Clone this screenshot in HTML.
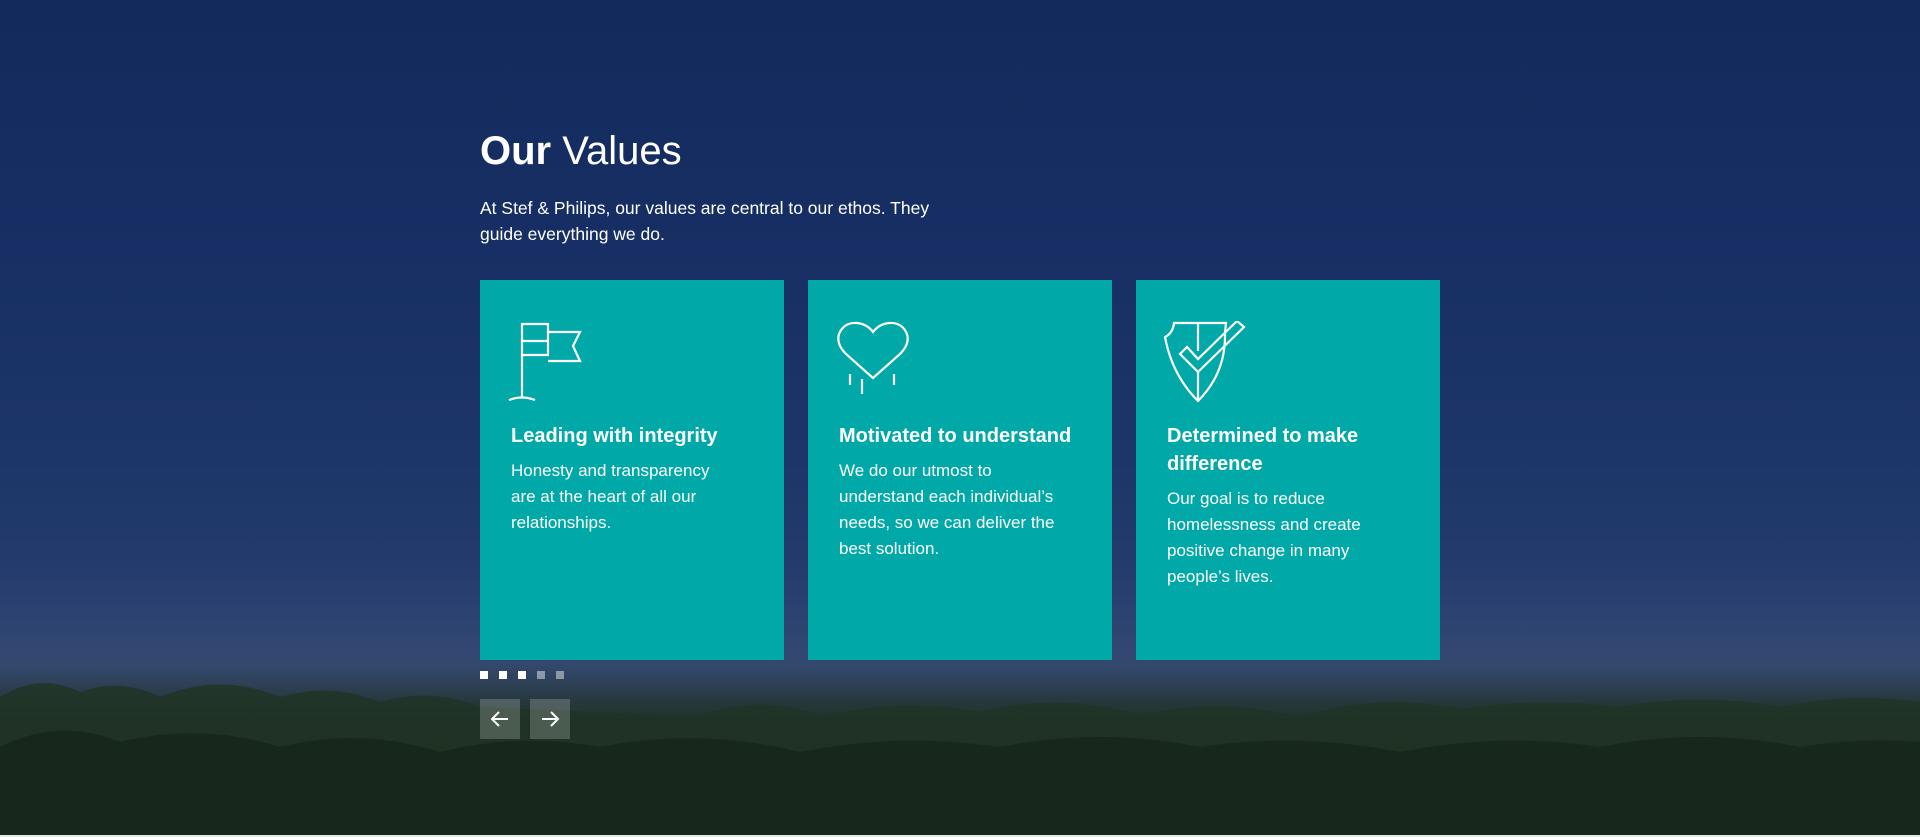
<!DOCTYPE html>
<html><head><meta charset="utf-8">
<style>
html,body{margin:0;padding:0;}
body{width:1920px;height:837px;overflow:hidden;position:relative;font-family:"Liberation Sans",Arial,sans-serif;color:#fff;
background:linear-gradient(180deg,#132a5c 0%,#172f64 30%,#1d3669 55%,#223a6c 66%,#2a4070 72%,#2b3e66 78%,#22332f 84%,#1b2a1f 92%,#141d16 100%);}
.haze{position:absolute;left:0;top:600px;width:1920px;height:120px;background:linear-gradient(180deg,rgba(60,80,130,0) 0%,rgba(70,95,145,.35) 55%,rgba(50,70,110,0) 100%);}
.trees{position:absolute;left:0;bottom:0;width:1920px;height:180px;}
.bottomline{position:absolute;left:0;bottom:0;width:1920px;height:2px;background:#e8e8e8;}
h1{position:absolute;left:480px;top:126px;margin:0;font-size:40px;font-weight:400;line-height:50px;}
h1 b{font-weight:900;}
.intro{position:absolute;left:480px;top:195px;width:490px;font-size:17.5px;line-height:26px;margin:0;}
.card{position:absolute;top:280px;width:304px;height:380px;background:#00a8a8;}
.card svg{position:absolute;left:28px;top:41px;}
.card .t{position:absolute;left:31px;top:142px;width:270px;font-size:20px;font-weight:900;line-height:28px;}
.card .p{position:absolute;left:31px;width:230px;font-size:17px;line-height:26px;}
.dots{position:absolute;left:480px;top:671px;}
.dots span{position:absolute;top:0;width:8px;height:8px;background:#fff;}
.arr{position:absolute;top:699px;width:40px;height:40px;background:rgba(255,255,255,.2);}
</style></head><body>
<div class="haze"></div>
<svg class="trees" viewBox="0 0 1920 180" preserveAspectRatio="none">
<path d="M0 40 Q40 15 80 35 Q120 20 160 40 Q220 15 280 40 Q330 25 380 45 Q430 30 480 50 L700 60 Q760 35 820 60 Q900 40 980 55 Q1060 35 1140 58 Q1220 40 1300 60 Q1380 35 1460 52 Q1540 40 1620 50 Q1700 35 1780 50 Q1850 35 1920 45 L1920 180 L0 180Z" fill="#1f3324" opacity=".8"/>
<path d="M0 90 Q60 60 120 85 Q200 65 280 90 Q360 70 440 95 Q520 75 600 90 Q700 70 800 95 Q900 75 1000 90 Q1100 70 1200 90 Q1300 75 1400 95 Q1500 75 1600 90 Q1700 70 1800 90 Q1860 80 1920 85 L1920 180 L0 180Z" fill="#18261a" opacity=".85"/>
</svg>
<div class="bottomline"></div>

<h1><b>Our</b> Values</h1>
<p class="intro">At Stef &amp; Philips, our values are central to our ethos. They guide everything we do.</p>

<div class="card" style="left:480px">
<svg width="80" height="82" viewBox="0 0 80 82" fill="none" stroke="#fff" stroke-width="2.2">
<path d="M14 2 V76 M1 79 Q14 74 27 79 M14 3 H40 V34 H14 M14 20 H40 M40 11 H72 L65 25 L72 40 H40"/>
</svg>
<div class="t">Leading with integrity</div>
<div class="p" style="top:178px;width:220px">Honesty and transparency are at the heart of all our relationships.</div>
</div>

<div class="card" style="left:808px">
<svg width="80" height="82" viewBox="0 0 80 82" fill="none" stroke="#fff" stroke-width="2.2">
<path d="M37 57 L10 33 Q0 23 3 13 Q8 1 21 2 Q31 3 37 11 Q43 3 53 2 Q66 1 71 13 Q74 23 64 33 Z"/>
<path d="M14 53 V64 M26 58 V73 M58 53 V64"/>
</svg>
<div class="t">Motivated to understand</div>
<div class="p" style="top:178px">We do our utmost to understand each individual’s needs, so we can deliver the best solution.</div>
</div>

<div class="card" style="left:1136px">
<svg width="84" height="84" viewBox="0 0 84 84" fill="none" stroke="#fff" stroke-width="2.2">
<path d="M10 2 H62 L61 12 Q62 52 34 80 Q8 54 1 16 Q9 12 10 2Z"/>
<path d="M34 2 V30 M34 50 V80"/>
<path d="M16 33 L34 51 L80 6 L73 0 L34 38 L23 26 Z"/>
</svg>
<div class="t">Determined to make difference</div>
<div class="p" style="top:206px">Our goal is to reduce homelessness and create positive change in many people’s lives.</div>
</div>

<div class="dots">
<span style="left:0"></span><span style="left:19px"></span><span style="left:38px"></span>
<span style="left:57px;opacity:.45"></span><span style="left:76px;opacity:.45"></span>
</div>
<div class="arr" style="left:480px"><svg width="40" height="40" viewBox="0 0 40 40" fill="none" stroke="#fff" stroke-width="2"><path d="M28 20 H12 M19 13 L12 20 L19 27"/></svg></div>
<div class="arr" style="left:530px"><svg width="40" height="40" viewBox="0 0 40 40" fill="none" stroke="#fff" stroke-width="2"><path d="M12 20 H28 M21 13 L28 20 L21 27"/></svg></div>
</body></html>
